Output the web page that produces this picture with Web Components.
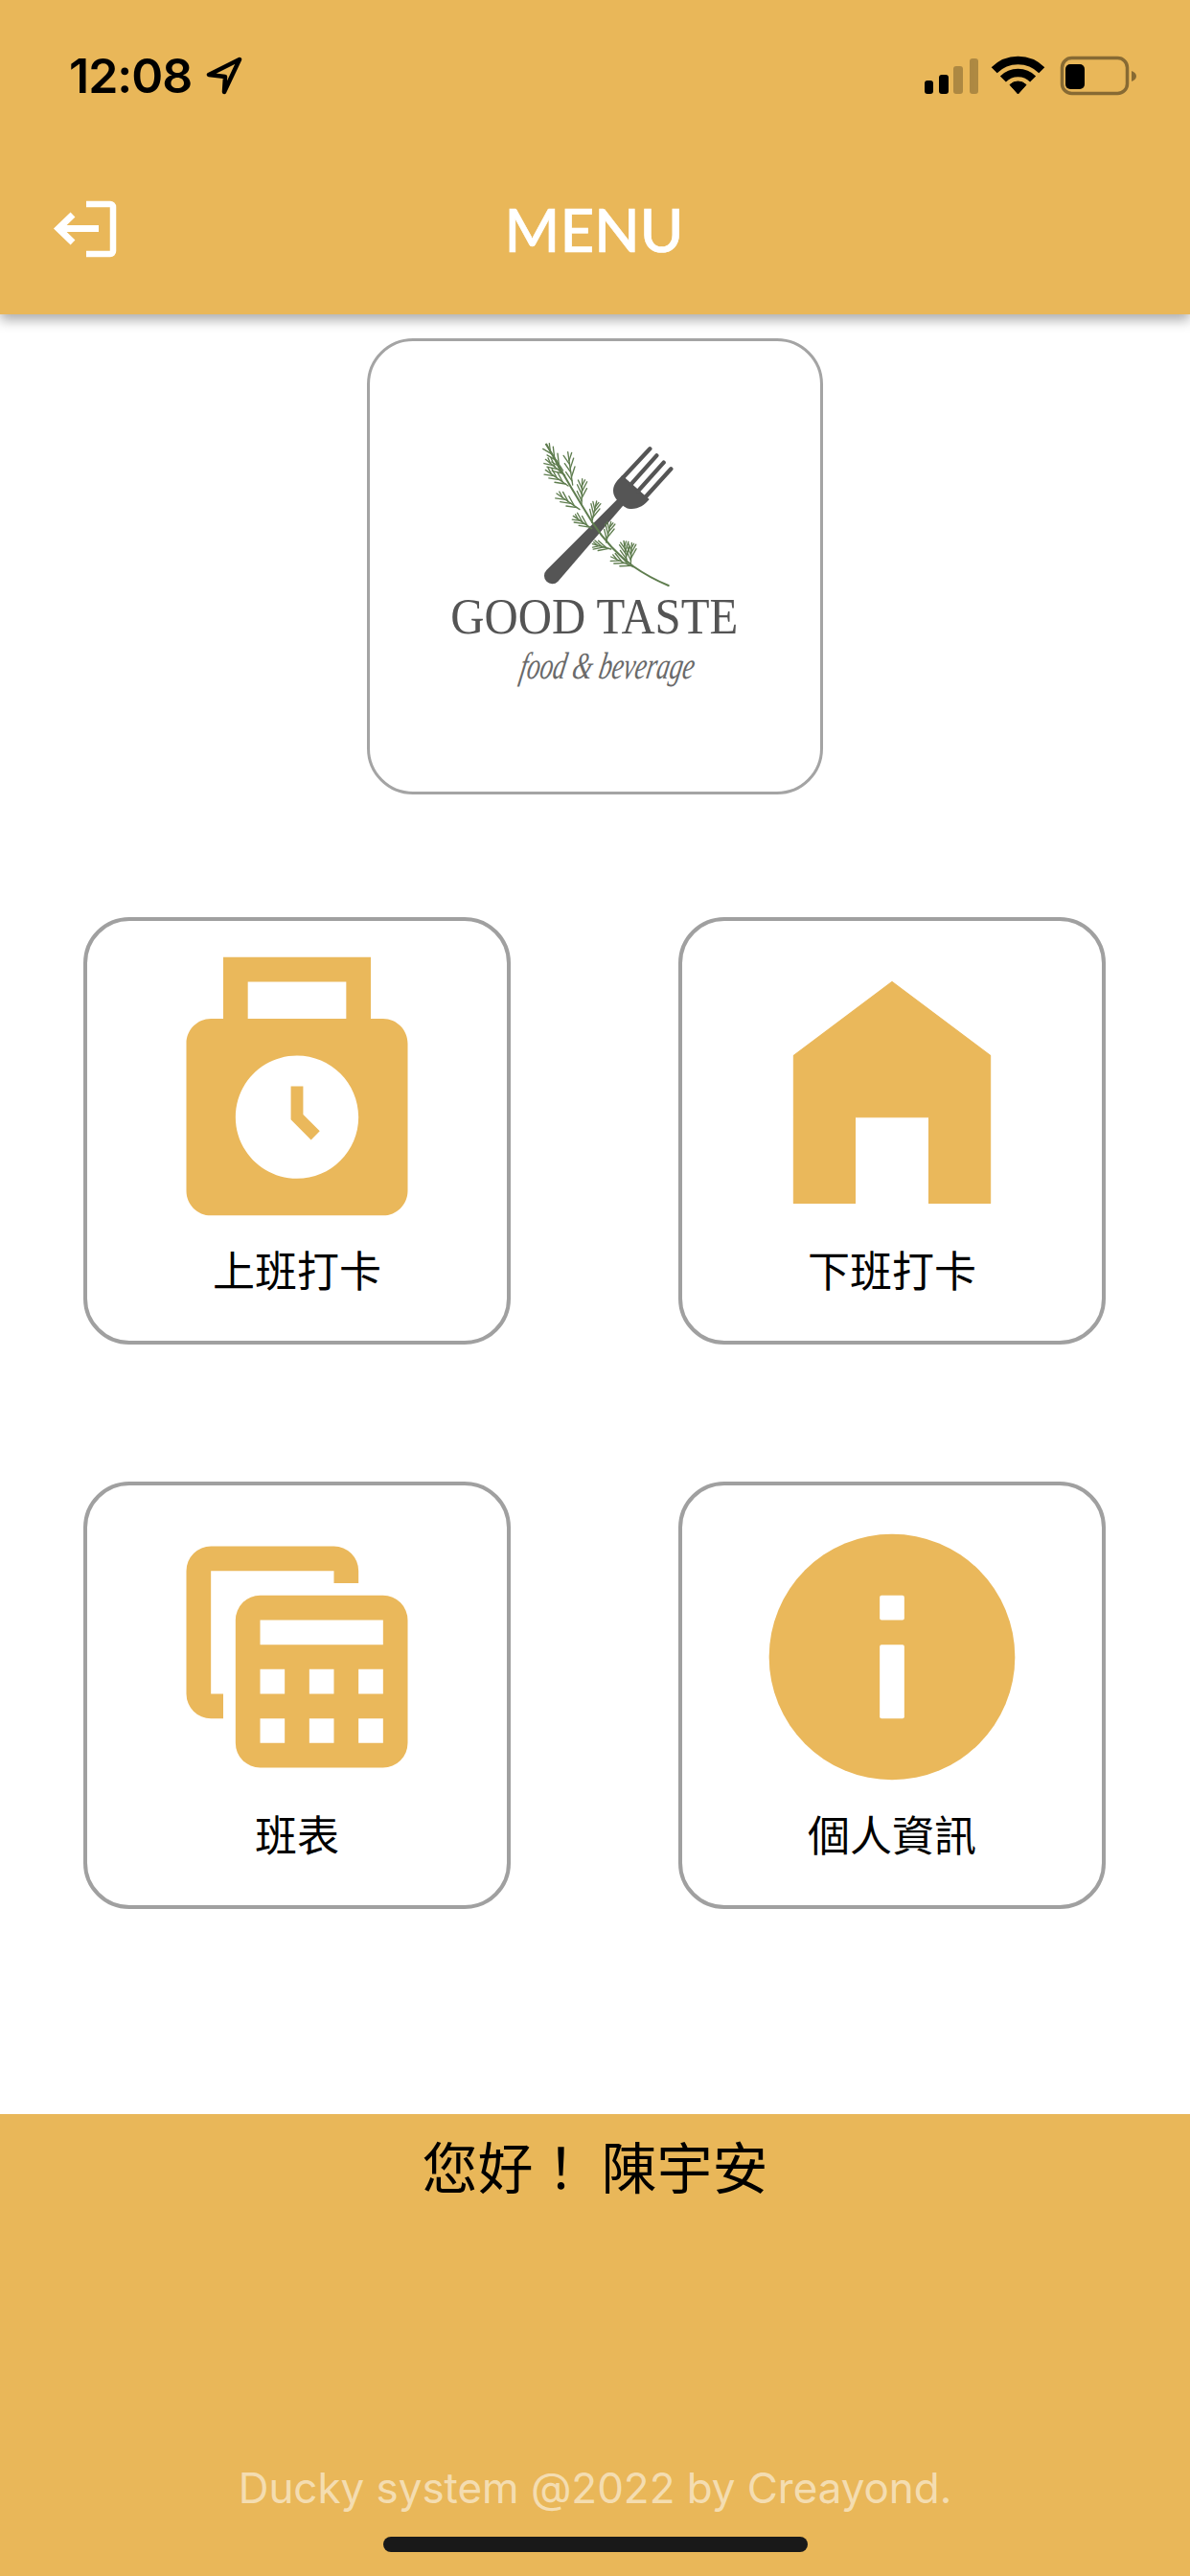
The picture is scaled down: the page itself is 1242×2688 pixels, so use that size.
<!DOCTYPE html>
<html lang="zh-Hant">
<head>
<meta charset="utf-8">
<title>Menu</title>
<style>
  html, body { margin: 0; padding: 0; background: #fff; }
  body { width: 1242px; height: 2688px; display: flex; flex-direction: column; overflow: hidden; font-family: "Noto Sans CJK TC", sans-serif; }
</style>
</head>
<body>
  <app-header></app-header>
  <menu-page>
    <logo-card></logo-card>
    <menu-grid>
      <menu-card><menu-icon slot="icon" name="punch"></menu-icon>上班打卡</menu-card>
      <menu-card><menu-icon slot="icon" name="home"></menu-icon>下班打卡</menu-card>
      <menu-card><menu-icon slot="icon" name="table"></menu-icon>班表</menu-card>
      <menu-card><menu-icon slot="icon" name="info"></menu-icon>個人資訊</menu-card>
    </menu-grid>
  </menu-page>
  <app-footer greeting="您好！ 陳宇安" credit="Ducky system @2022 by Creayond."></app-footer>

<script>
const BRAND = '#e9b759';

class StatusBar extends HTMLElement {
  constructor() {
    super();
    this.attachShadow({ mode: 'open' });
    this.shadowRoot.innerHTML = `
      <style>
        :host { display: flex; justify-content: space-between; align-items: flex-start; height: 164px; padding: 55px 56px 0 72px; box-sizing: border-box; }
        .left { display: flex; align-items: center; gap: 15px; height: 48px; }
        .time { font: 600 50px/48px Inter, "Liberation Sans", sans-serif; color: #000; letter-spacing: -1px; }
        svg { display: block; }
      </style>
      <div class="left">
        <span class="time">12:08</span>
        <svg width="38" height="40" viewBox="0 0 38 40"><path d="M35 3 3 19l17 2-1 16z" fill="none" stroke="#000" stroke-width="4.5" stroke-linejoin="round"/></svg>
      </div>
      <svg width="222" height="48" viewBox="0 0 222 48">
        <g fill="#000">
          <rect x="1" y="29" width="9" height="14" rx="3"/>
          <rect x="16" y="23" width="10" height="20" rx="3"/>
        </g>
        <g fill="#000" opacity=".25">
          <rect x="31" y="14" width="10" height="29" rx="3"/>
          <rect x="48" y="6" width="9" height="37" rx="3"/>
        </g>
        <g fill="none" stroke="#000" stroke-width="8.5">
          <path d="M73.700 18.300A35 35 0 0 1 123.300 18.300"/>
          <path d="M82.900 27.500A22 22 0 0 1 114.100 27.500"/>
        </g>
        <path d="M98.500 43 90 33.500A12 12 0 0 1 107 33.500z" fill="#000" stroke="#000" stroke-linejoin="round" stroke-width="1"/>
        <rect x="144.500" y="5.500" width="68" height="37" rx="10" fill="none" stroke="#000" stroke-opacity=".42" stroke-width="3.500"/>
        <rect x="148" y="12" width="20" height="26" rx="5" fill="#000"/>
        <path d="M217 19v11c3-1 5-3 5-5.500s-2-4.500-5-5.500z" fill="#000" fill-opacity=".42"/>
      </svg>
    `;
  }
}

class AppHeader extends HTMLElement {
  constructor() {
    super();
    this.attachShadow({ mode: 'open' });
    this.shadowRoot.innerHTML = `
      <style>
        :host { display: block; height: 328px; background: ${BRAND}; box-shadow: 0 6px 12px rgba(0,0,0,.33); position: relative; z-index: 2; flex: none; }
        .bar { display: grid; grid-template-columns: 1fr auto 1fr; align-items: center; height: 150px; padding-left: 54px; padding-right: 54px; }
        .title { font: 500 62px/72px Lato, "Open Sans", sans-serif; color: #fff; -webkit-text-stroke: .7px #fff; transform: translateX(-1px); }
        svg { display: block; }
      </style>
      <status-bar></status-bar>
      <div class="bar">
        <svg width="70" height="64" viewBox="0 0 70 64">
          <path d="M36 6h25a3 3 0 0 1 3 3v46a3 3 0 0 1-3 3H36" fill="none" stroke="#fff" stroke-width="6.500"/>
          <path d="M49 31.500H10" fill="none" stroke="#fff" stroke-width="7"/>
          <path d="M22 17 7 31.500 22 46" fill="none" stroke="#fff" stroke-width="7"/>
        </svg>
        <div class="title">MENU</div>
        <div></div>
      </div>
    `;
  }
}

// rosemary side branches: [base x, base y, tip x, tip y]
const SPRIGS = [
  [440,150,386,68],[470,195,455,92],[446,165,385,115],[456,198,385,148],
  [498,255,500,176],[492,272,420,222],[530,312,545,246],[530,332,472,292],
  [575,375,590,310],[590,396,532,380],[640,436,630,370],[652,440,655,376],[660,452,590,420]
];

class LogoCard extends HTMLElement {
  constructor() {
    super();
    this.attachShadow({ mode: 'open' });
    let needles = '';
    for (const [x1, y1, x2, y2] of SPRIGS) {
      const dx = x2 - x1, dy = y2 - y1;
      const a = Math.atan2(dy, dx);
      needles += `<path d="M${x1} ${y1}L${x2} ${y2}"/>`;
      [.12, .24, .38, .5, .62, .74].forEach((f, i) => {
        const px = x1 + dx * f, py = y1 + dy * f;
        const s = i % 2 ? .46 : -.46;
        const l = Math.min(34, Math.hypot(dx, dy) * (1 - f) * .95);
        needles += `<path d="M${px.toFixed(1)} ${py.toFixed(1)}l${(Math.cos(a + s) * l).toFixed(1)} ${(Math.sin(a + s) * l).toFixed(1)}"/>`;
      });
    }
    this.shadowRoot.innerHTML = `
      <style>
        :host { display: flex; align-items: center; justify-content: center; width: 476px; height: 476px; box-sizing: border-box; border: 3px solid #a4a4a4; border-radius: 48px; background: #fff; flex: none; }
        svg { display: block; }
        text { fill: #545454; }
        .name { font-family: "Liberation Serif", serif; font-size: 160px; }
        .tag { font-family: "Liberation Serif", serif; font-style: italic; font-size: 88px; fill: #6a6a6a; }
      </style>
      <svg width="360" height="300" viewBox="0 0 1080 900">
        <g fill="#555">
          <path d="M628 222 388 462A25 25 0 0 0 424 497L645 240z"/>
          <path d="M597 212C597 195 610 180 625 165L710 240C695 258 675 272 650 270 635 268 625 258 615 248 605 238 597 228 597 212z"/>
        </g>
        <g stroke="#555" stroke-width="13" stroke-linecap="round">
          <path d="M628 172 712 82M652 194 733 103M675 214 755 125M697 234 778 145"/>
        </g>
        <g fill="none" stroke="#5f7d4f" stroke-linecap="round">
          <path d="M388 68Q450 180 530 310 590 400 660 450 710 485 770 510" stroke-width="6"/>
          <g stroke-width="4">${needles}</g>
        </g>
        <text class="name" x="88" y="660" textLength="900" lengthAdjust="spacingAndGlyphs">GOOD TASTE</text>
        <text class="tag" x="0" y="0" textLength="545" lengthAdjust="spacingAndGlyphs" transform="translate(300 800) scale(1 1.35) skewX(-14)">food &amp; beverage</text>
      </svg>
    `;
  }
}

class MenuIcon extends HTMLElement {
  static paths = {
    punch: '<path fill-rule="evenodd" d="M19 6h-1V1H6v5H5C3.900 6 3 6.900 3 8v12c0 1.100.9 2 2 2h14c1.100 0 2-.9 2-2V8c0-1.100-.9-2-2-2zM8 3h8v3H8V3zm4 16c-2.760 0-5-2.240-5-5s2.240-5 5-5 5 2.240 5 5-2.240 5-5 5z"/><path d="M12.500 11.500h-1v2.710l1.640 1.640.71-.71-1.350-1.350z"/>',
    home: '<path stroke="#eab85b" stroke-width=".08" stroke-linejoin="round" d="M12 3 4 9v12h5v-7h6v7h5V9z"/>',
    table: '<path d="M5 3h10a2 2 0 0 1 2 2v1h-2V5H5v10h1v2H5a2 2 0 0 1-2-2V5a2 2 0 0 1 2-2z"/><path fill-rule="evenodd" d="M9 7h10a2 2 0 0 1 2 2v10a2 2 0 0 1-2 2H9a2 2 0 0 1-2-2V9a2 2 0 0 1 2-2zm0 2v2h10V9zm0 4v2h2v-2zm4 0v2h2v-2zm4 0v2h2v-2zM9 17v2h2v-2zm4 0v2h2v-2zm4 0v2h2v-2z"/>',
    info: '<circle cx="12" cy="12" r="10"/><rect x="11" y="7" width="2" height="2" rx=".15" fill="#fff"/><rect x="11" y="11" width="2" height="6" rx=".15" fill="#fff"/>'
  };
  connectedCallback() {
    if (this.shadowRoot) return;
    this.attachShadow({ mode: 'open' });
    this.shadowRoot.innerHTML = `
      <style>
        :host { display: block; width: 308px; height: 308px; }
        svg { display: block; width: 100%; height: 100%; fill: #eab85b; }
      </style>
      <svg viewBox="0 0 24 24">${MenuIcon.paths[this.getAttribute('name')]}</svg>
    `;
  }
}

class MenuCard extends HTMLElement {
  constructor() {
    super();
    this.attachShadow({ mode: 'open' });
    this.shadowRoot.innerHTML = `
      <style>
        :host { display: flex; flex-direction: column; align-items: center; width: 446px; height: 446px; box-sizing: border-box; padding-top: 25px; border: 4px solid #a0a0a0; border-radius: 48px; background: #fff; }
        .label { font: 400 44px/60px "Noto Sans CJK TC", sans-serif; color: #000; }
      </style>
      <slot name="icon"></slot>
      <div class="label"><slot></slot></div>
    `;
  }
}

class MenuGrid extends HTMLElement {
  constructor() {
    super();
    this.attachShadow({ mode: 'open' });
    this.shadowRoot.innerHTML = `
      <style>
        :host { display: grid; grid-template-columns: 446px 446px; grid-auto-rows: 446px; column-gap: 175px; row-gap: 143px; align-self: flex-start; margin-top: 128px; margin-left: 87px; }
      </style>
      <slot></slot>
    `;
  }
}

class MenuPage extends HTMLElement {
  constructor() {
    super();
    this.attachShadow({ mode: 'open' });
    this.shadowRoot.innerHTML = `
      <style>
        :host { display: flex; flex-direction: column; align-items: center; flex: 1; padding-top: 25px; }
      </style>
      <slot></slot>
    `;
  }
}

class AppFooter extends HTMLElement {
  constructor() {
    super();
    this.attachShadow({ mode: 'open' });
    this.shadowRoot.innerHTML = `
      <style>
        :host { display: flex; flex-direction: column; align-items: center; height: 482px; box-sizing: border-box; padding-top: 15px; padding-bottom: 64px; background: ${BRAND}; position: relative; flex: none; }
        .hello { font: 400 58px/76px "Noto Sans CJK TC", sans-serif; color: #000; white-space: pre; }
        .credit { margin-top: auto; font: 400 44px/56px Inter, "Liberation Sans", sans-serif; color: rgba(255,255,255,.55); letter-spacing: -.05px; }
        .home { position: absolute; left: 400px; bottom: 25px; width: 443px; height: 16px; border-radius: 8px; background: #191919; }
      </style>
      <div class="hello"></div>
      <div class="credit"></div>
      <div class="home"></div>
    `;
    this.shadowRoot.querySelector('.hello').textContent = this.getAttribute('greeting');
    this.shadowRoot.querySelector('.credit').textContent = this.getAttribute('credit');
  }
}

customElements.define('status-bar', StatusBar);
customElements.define('app-header', AppHeader);
customElements.define('logo-card', LogoCard);
customElements.define('menu-icon', MenuIcon);
customElements.define('menu-card', MenuCard);
customElements.define('menu-grid', MenuGrid);
customElements.define('menu-page', MenuPage);
customElements.define('app-footer', AppFooter);
</script>
</body>
</html>
